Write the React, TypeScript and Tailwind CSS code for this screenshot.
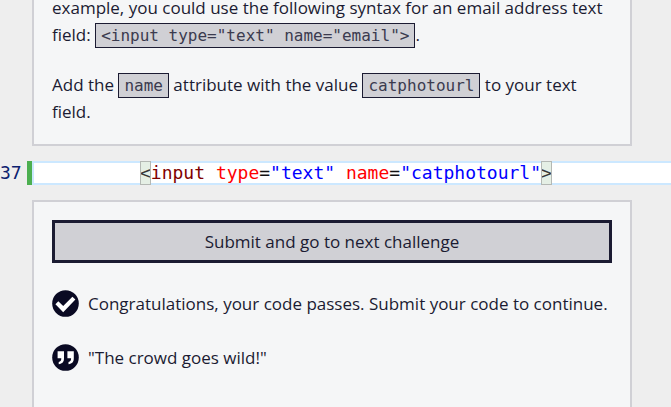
import type { ReactNode } from "react";

function InlineCode({ children }: { children: ReactNode }) {
  return (
    <code className="border border-[#1b1b32] bg-[#d0d0d5] px-[5px] py-[2px] font-['DejaVu_Sans_Mono',monospace] text-[16px] leading-none text-[#3b3b4f]">
      {children}
    </code>
  );
}

function CheckIcon() {
  return (
    <svg viewBox="0 0 27 27" className="size-[27px] shrink-0" aria-hidden="true">
      <circle cx="13.5" cy="13.5" r="13.3" fill="#0a0a23" />
      <path d="M3.4 14.2 6.3 11.3 11.2 16 20.4 6.8 23.4 9.6 11.2 22.3Z" fill="#fff" />
    </svg>
  );
}

function QuoteIcon() {
  return (
    <svg viewBox="0 0 27 27" className="size-[27px] shrink-0" aria-hidden="true">
      <circle cx="13.5" cy="13.5" r="13.3" fill="#0a0a23" />
      <path
        d="M5.6 7.3H12V14.2C12 17.8 10.4 19.7 6.7 20.2V18C8.6 17.5 9.3 16.4 9.3 14.2H5.6ZM15.4 7.3H21.8V14.2C21.8 17.8 20.2 19.7 16.5 20.2V18C18.4 17.5 19.1 16.4 19.1 14.2H15.4Z"
        fill="#fff"
      />
    </svg>
  );
}

export default function App() {
  return (
    <main className="flex h-screen flex-col overflow-hidden bg-[#eeeeee] font-['Open_Sans',sans-serif] text-[17px] leading-[27px] text-[#1b1b32]">
      <section className="ml-8 w-full max-w-[600px] shrink-0 border-x-2 border-b-2 border-[#d0d0d5] bg-[#f5f6f7] px-[18px] pb-[19px]">
        <p className="-mt-[6px]">
          example, you could use the following syntax for an email address text field:{" "}
          <InlineCode>&lt;input type="text" name="email"&gt;</InlineCode>.
        </p>
        <p className="mt-[23px]">
          Add the <InlineCode>name</InlineCode> attribute with the value{" "}
          <InlineCode>catphotourl</InlineCode> to your text field.
        </p>
      </section>

      <div className="my-[15px] flex h-6 shrink-0 font-['DejaVu_Sans_Mono',monospace] text-[18px] leading-[24px] whitespace-pre">
        <span className="w-[27px] shrink-0 text-[#0b216f]">37</span>
        <span className="w-[5px] shrink-0 bg-[#4caf50]" />
        <code className="flex flex-1 items-center border-y-2 border-l-2 border-[#cce8ff] bg-white pl-[106px] font-['DejaVu_Sans_Mono',monospace]">
          <span className="bg-[#e5efe5] text-[#383838] outline -outline-offset-1 outline-[#b4b8b4]">&lt;</span>
          <span className="text-[#800000]">input </span>
          <span className="text-[#ff0000]">type</span>
          <span className="text-[#111111]">=</span>
          <span className="text-[#0000ff]">"text" </span>
          <span className="text-[#ff0000]">name</span>
          <span className="text-[#111111]">=</span>
          <span className="text-[#0000ff]">"catphotourl"</span>
          <span className="bg-[#e5efe5] text-[#383838] outline -outline-offset-1 outline-[#b4b8b4]">&gt;</span>
        </code>
      </div>

      <section className="ml-8 w-full max-w-[600px] flex-1 border-x-2 border-t-2 border-[#d0d0d5] bg-[#f5f6f7] px-[18px] pt-[18px]">
        <button type="button" className="block h-[43px] w-full border-3 border-[#1b1b32] bg-[#d0d0d5]">
          Submit and go to next challenge
        </button>
        <div className="mt-[27px] flex flex-col gap-[27px]">
          <p className="flex items-center gap-[9px]">
            <CheckIcon />
            Congratulations, your code passes. Submit your code to continue.
          </p>
          <p className="flex items-center gap-[9px]">
            <QuoteIcon />
            "The crowd goes wild!"
          </p>
        </div>
      </section>
    </main>
  );
}
